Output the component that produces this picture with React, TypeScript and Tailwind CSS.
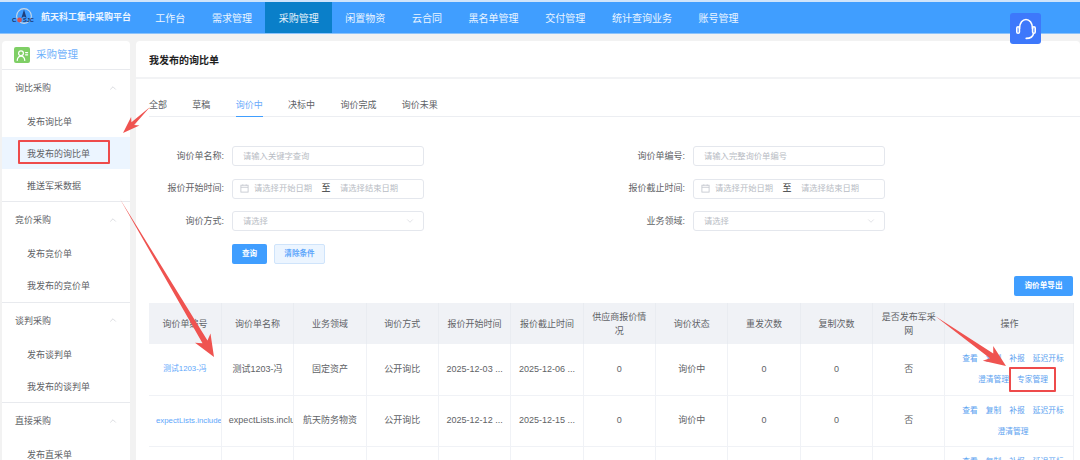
import React from "react";
import { ChevronUp, ChevronDown } from "lucide-react";

const navItems = ["工作台", "需求管理", "采购管理", "闲置物资", "云合同", "黑名单管理", "交付管理", "统计查询业务", "账号管理"];
const tabs = ["全部", "草稿", "询价中", "决标中", "询价完成", "询价未果"];
const sections = [
  { title: "询比采购", items: ["发布询比单", "我发布的询比单", "推送军采数据"], first: true },
  { title: "竞价采购", items: ["发布竞价单", "我发布的竞价单"], first: false },
  { title: "谈判采购", items: ["发布谈判单", "我发布的谈判单"], first: false },
  { title: "直接采购", items: ["发布直采单"], first: false },
];
const headers = ["询价单编号", "询价单名称", "业务领域", "询价方式", "报价开始时间", "报价截止时间", "供应商报价情况", "询价状态", "重发次数", "复制次数", "是否发布军采网", "操作"];

function Logo() {
  return (
    <svg width="28" height="20" viewBox="0 0 28 20" className="shrink-0">
      <circle cx="14" cy="8" r="7.4" fill="none" stroke="#c9d8e8" strokeWidth="1.1" />
      <path d="M14 1.5 L16.6 10 L14 8.6 L11.4 10 Z" fill="#1f3f7a" />
      <circle cx="9.5" cy="12" r="2.4" fill="#d9534f" />
      <text x="2" y="14" fontSize="6" fontWeight="700" fontFamily="Liberation Sans" fill="#16306b">C</text>
      <text x="13" y="14" fontSize="5.6" fontWeight="700" fontFamily="Liberation Sans" fill="#16306b">SJC</text>
    </svg>
  );
}

function Field({ label, children }: { label: string; children: React.ReactNode }) {
  return (
    <div className="flex items-center">
      <span className="w-[77px] pr-[8px] pt-[1px] text-right text-[9px] text-[#606266] whitespace-nowrap">{label}:</span>
      <div className="w-[192px] h-[20px] flex items-center border border-[#e4e7ed] rounded-[3px] bg-white px-[10px] text-[8.3px] text-[#b8bcc4]">
        {children}
      </div>
    </div>
  );
}

function DateRange() {
  return (
    <>
      <svg width="9" height="9" viewBox="0 0 9 9" fill="none" stroke="#c0c4cc" strokeWidth="0.8" className="-ml-[3px] mr-[5px] shrink-0">
        <rect x="0.9" y="1.2" width="7.2" height="6.9" />
        <path d="M0.9 3.3H8.1M2.8 0.4V1.6M6.2 0.4V1.6" />
      </svg>
      <span className="w-[58px] text-center whitespace-nowrap">请选择开始日期</span>
      <span className="w-[28px] text-center text-[9px] text-[#303133]">至</span>
      <span className="w-[58px] text-center whitespace-nowrap">请选择结束日期</span>
    </>
  );
}

function Select() {
  return (
    <div className="flex flex-1 items-center justify-between">
      <span>请选择</span>
      <ChevronDown size={10} strokeWidth={1} className="text-[#b8bcc4] -mr-[2px]" />
    </div>
  );
}

function Ops({ second }: { second: boolean }) {
  return (
    <div className="flex flex-col items-center gap-[6px] pl-[7px] text-[7.75px] leading-[15px] text-[#5b9ff0]">
      <div className="flex gap-[8px]">
        <span>查看</span><span>复制</span><span>补报</span><span>延迟开标</span>
      </div>
      <div className="flex gap-[8px]">
        <span>澄清管理</span>
        {second && <span>专家管理</span>}
      </div>
    </div>
  );
}

function Row({ name, no, domain, start, end, second, leftName }: { name: string; no: string; domain: string; start: string; end: string; second: boolean; leftName: boolean }) {
  const td = "border-r border-b border-[#f0f2f6] text-center p-0 overflow-hidden whitespace-nowrap";
  const body = `${td} text-[#606266] text-[9px]`;
  return (
    <tr className="h-[51px]">
      <td className={`${td} text-[#5ea6fb] text-[7.8px]`}>
        <div className={leftName ? "text-left pl-[7px]" : ""}>{no}</div>
      </td>
      <td className={body}>
        <div className={`overflow-hidden ${leftName ? "text-left pl-[7px]" : ""}`}>{name}</div>
      </td>
      <td className={body}>{domain}</td>
      <td className={body}>{no ? "公开询比" : ""}</td>
      <td className={body}>{start ? `${start} ...` : ""}</td>
      <td className={body}>{end ? `${end} ...` : ""}</td>
      <td className={body}>{no ? "0" : ""}</td>
      <td className={body}>{no ? "询价中" : ""}</td>
      <td className={body}>{no ? "0" : ""}</td>
      <td className={body}>{no ? "0" : ""}</td>
      <td className={body}>{no ? "否" : ""}</td>
      <td className={body}><Ops second={second} /></td>
    </tr>
  );
}

function Arrow({ x1, y1, x2, y2, head = 22, wing = 8 }: { x1: number; y1: number; x2: number; y2: number; head?: number; wing?: number }) {
  const len = Math.hypot(x2 - x1, y2 - y1);
  const ux = (x2 - x1) / len;
  const uy = (y2 - y1) / len;
  const nx = -uy;
  const ny = ux;
  const bx = x2 - ux * head;
  const by = y2 - uy * head;
  const cx = x2 - ux * head * 0.8;
  const cy = y2 - uy * head * 0.8;
  const pts = [
    [x1, y1],
    [cx + nx * wing * 0.32, cy + ny * wing * 0.32],
    [bx + nx * wing, by + ny * wing],
    [x2, y2],
    [bx - nx * wing, by - ny * wing],
    [cx - nx * wing * 0.32, cy - ny * wing * 0.32],
  ];
  return <polygon points={pts.map((p) => p.join(",")).join(" ")} fill="#ef5350" />;
}

export default function App() {
  return (
    <div className="relative w-[1080px] h-[460px] overflow-hidden bg-[#f2f2f2] font-['Liberation_Sans','Noto_Sans_CJK_SC',sans-serif]">
      <div className="h-[2px] bg-[#cfe4fb]" />
      <header className="h-[32px] bg-[#409eff] flex items-center border-b border-[#8cc3fb]">
        <div className="w-[142px] pl-[10px] flex items-center gap-[3px]">
          <Logo />
          <span className="text-[9px] font-bold text-white/90 whitespace-nowrap">航天科工集中采购平台</span>
        </div>
        {navItems.map((n) => (
          <div
            key={n}
            className={`h-full flex items-center px-[13.33px] pt-[1px] text-[10px] text-white/90 whitespace-nowrap ${n === "采购管理" ? "bg-[#0a7fc9]" : ""}`}
          >
            {n}
          </div>
        ))}
      </header>

      <div className="flex gap-[6px] pl-[2px] pt-[7px]">
        <aside className="w-[128px] h-[500px] shrink-0 bg-white rounded-t-[4px]">
          <div className="h-[29px] flex items-center gap-[6px] pl-[12px] border-b border-[#e8eaee]">
            <div className="w-[16px] h-[16px] rounded-[2px] bg-[#7fcf66] flex items-center justify-center">
              <svg width="13" height="13" viewBox="0 0 13 13" fill="none" stroke="white" strokeWidth="1.2" strokeLinecap="round">
                <circle cx="5" cy="4.2" r="2.4" />
                <path d="M1.2 11.4C1.6 8.4 3 7.2 5 7.2S8.4 8.4 8.8 11.4" />
                <path d="M9.6 3.6H11.6M9.6 5.8H11.6" />
              </svg>
            </div>
            <span className="text-[10.5px] text-[#6fb1fb]">采购管理</span>
          </div>
          {sections.map((s) => (
            <div key={s.title} className="border-b border-[#e8eaee]">
              <div className={`${s.first ? "h-[35px]" : "h-[35.5px]"} flex items-center justify-between pl-[13px] pr-[12px] text-[9px] text-[#606266]`}>
                <span className="pt-[2px]">{s.title}</span>
                <ChevronUp size={10} strokeWidth={1} className="text-[#a9adb5]" />
              </div>
              <div>
                {s.items.map((i) => (
                  <div key={i} className={`h-[32px] flex items-center pl-[25px] pt-[3px] text-[9px] text-[#606266] ${i === "我发布的询比单" ? "bg-[#ecf5ff]" : ""}`}>
                    {i}
                  </div>
                ))}
              </div>
            </div>
          ))}
        </aside>

        <main className="flex-1 h-[500px] bg-white rounded-t-[4px]">
          <div className="h-[38px] flex items-center pl-[13px] pt-[2px] border-b-[2px] border-[#f2f3f5] text-[10px] font-bold text-[#1f1f1f]">
            我发布的询比单
          </div>
          <div className="flex h-[38px] items-end ml-[13px] border-b-[1px] border-[#eceef2]">
            {tabs.map((t) => (
              <div
                key={t}
                className={`h-[25px] mr-[25.33px] -mb-px text-[9px] pt-[6.5px] whitespace-nowrap ${t === "询价中" ? "text-[#6aaafb] border-b border-[#409eff]" : "text-[#606266]"}`}
              >
                {t}
              </div>
            ))}
          </div>

          <div className="pt-[29px] pl-[19px]">
            <div className="flex flex-col gap-[12.5px]">
              <div className="flex gap-[192px]">
                <Field label="询价单名称"><span>请输入关键字查询</span></Field>
                <Field label="询价单编号"><span>请输入完整询价单编号</span></Field>
              </div>
              <div className="flex gap-[192px]">
                <Field label="报价开始时间"><DateRange /></Field>
                <Field label="报价截止时间"><DateRange /></Field>
              </div>
              <div className="flex gap-[192px]">
                <Field label="询价方式"><Select /></Field>
                <Field label="业务领域"><Select /></Field>
              </div>
            </div>
            <div className="flex gap-[7px] mt-[13px] ml-[77px]">
              <button className="w-[35px] h-[20px] rounded-[2px] bg-[#409eff] text-white text-[7.6px] font-bold">查询</button>
              <button className="w-[51px] h-[20px] rounded-[2px] bg-[#ecf5ff] border border-[#cfe4fb] text-[#5ea6fb] text-[7.6px] font-bold">清除条件</button>
            </div>
          </div>

          <div className="flex justify-end w-[937px] mt-[12px]">
            <button className="w-[59px] h-[20px] rounded-[2px] bg-[#409eff] text-white text-[7.6px] font-bold">询价单导出</button>
          </div>

          <table className="ml-[13px] mt-[7px] w-[925px] table-fixed border-collapse">
            <colgroup>
              {headers.map((h, i) => (
                <col key={h} className={i === 11 ? "w-[129px]" : "w-[72.36px]"} />
              ))}
            </colgroup>
            <thead>
              <tr className="h-[41px] bg-[#f0f2f6]">
                {headers.map((h) => (
                  <th key={h} className="border-r border-[#e9ecf1] px-[8px] text-[9px] leading-[14px] font-normal text-[#606266] text-center">
                    {h}
                  </th>
                ))}
              </tr>
            </thead>
            <tbody>
              <Row no="测试1203-冯" name="测试1203-冯" domain="固定资产" start="2025-12-03" end="2025-12-06" second leftName={false} />
              <Row no="expectLists.include" name="expectLists.include" domain="航天防务物资" start="2025-12-12" end="2025-12-15" second={false} leftName />
              <Row no="" name="" domain="" start="" end="" second={false} leftName={false} />
            </tbody>
          </table>
        </main>
      </div>

      <div className="absolute left-[1010px] top-[13px] w-[31px] h-[31px] rounded-[3px] bg-[#3d78fb] flex items-center justify-center">
        <svg width="22" height="22" viewBox="0 0 22 22" fill="none" stroke="white" strokeWidth="1.6" strokeLinecap="round">
          <path d="M4.5 10.5C4.5 -1.5 17.5 -1.5 17.5 10.5" />
          <rect x="1.8" y="8.8" width="2.6" height="6.4" rx="1.3" />
          <rect x="17.6" y="8.8" width="2.6" height="6.4" rx="1.3" />
          <path d="M18.6 15.5C17.8 18.8 15 20.4 11.2 20.4" />
        </svg>
      </div>

      <div className="absolute left-[18px] top-[140px] w-[92px] h-[24px] border-2 border-[#ee4b4b] rounded-[1px]" />
      <div className="absolute left-[1009px] top-[367px] w-[47px] h-[25px] border-2 border-[#ee4b4b] rounded-[1px]" />
      <svg width="1080" height="460" className="absolute left-0 top-0 pointer-events-none">
        <Arrow x1={150} y1={107} x2={123} y2={133} head={17} wing={6} />
        <Arrow x1={120} y1={199} x2={214} y2={357} head={22} wing={9} />
        <Arrow x1={935} y1={316} x2={1006} y2={366} head={22} wing={9} />
      </svg>
    </div>
  );
}
